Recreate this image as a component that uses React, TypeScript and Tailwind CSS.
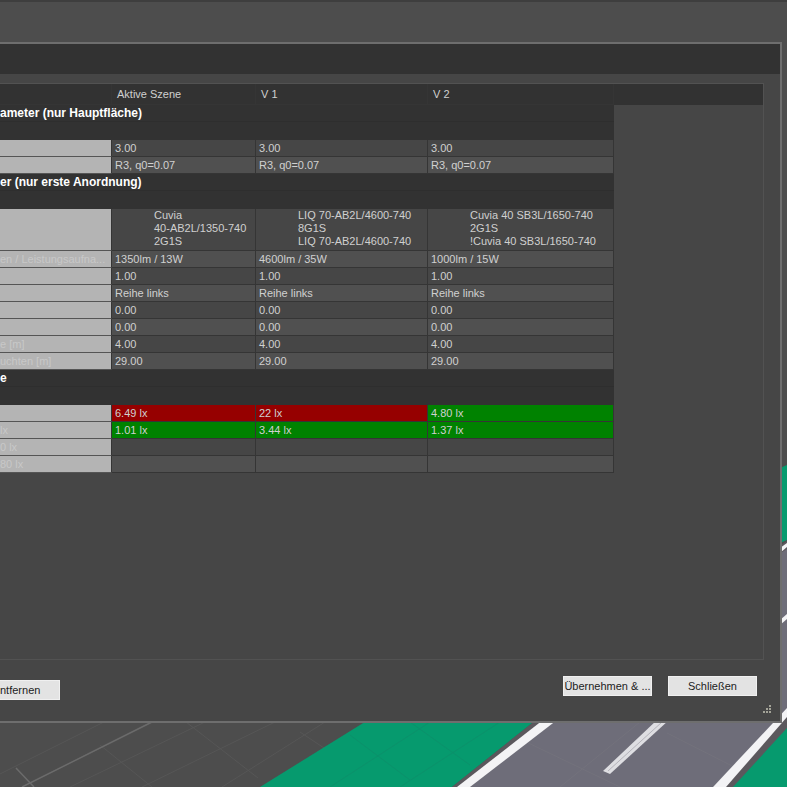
import clsx from "clsx";

type Row =
  | { kind: "group"; label: string }
  | { kind: "data"; label: string; values: string[]; tone?: ("bad" | "good")[] }
  | { kind: "lamp"; label: string; values: string[] };

const rows: Row[] = [
  { kind: "group", label: "ameter (nur Hauptfläche)" },
  { kind: "data", label: "", values: ["3.00", "3.00", "3.00"] },
  { kind: "data", label: "", values: ["R3, q0=0.07", "R3, q0=0.07", "R3, q0=0.07"] },
  { kind: "group", label: "er (nur erste Anordnung)" },
  {
    kind: "lamp",
    label: "",
    values: [
      "Cuvia\n40-AB2L/1350-740\n2G1S",
      "LIQ 70-AB2L/4600-740\n8G1S\nLIQ 70-AB2L/4600-740",
      "Cuvia 40 SB3L/1650-740\n2G1S\n!Cuvia 40 SB3L/1650-740",
    ],
  },
  { kind: "data", label: "en / Leistungsaufna...", values: ["1350lm / 13W", "4600lm / 35W", "1000lm / 15W"] },
  { kind: "data", label: "", values: ["1.00", "1.00", "1.00"] },
  { kind: "data", label: "", values: ["Reihe links", "Reihe links", "Reihe links"] },
  { kind: "data", label: "", values: ["0.00", "0.00", "0.00"] },
  { kind: "data", label: "", values: ["0.00", "0.00", "0.00"] },
  { kind: "data", label: "e [m]", values: ["4.00", "4.00", "4.00"] },
  { kind: "data", label: "uchten [m]", values: ["29.00", "29.00", "29.00"] },
  { kind: "group", label: "e" },
  { kind: "data", label: "", values: ["6.49 lx", "22 lx", "4.80 lx"], tone: ["bad", "bad", "good"] },
  { kind: "data", label: "lx", values: ["1.01 lx", "3.44 lx", "1.37 lx"], tone: ["good", "good", "good"] },
  { kind: "data", label: "0 lx", values: ["", "", ""] },
  { kind: "data", label: "80 lx", values: ["", "", ""] },
];

// rows are shaded alternately, starting over after each group heading
const isLight = (index: number) => {
  let n = 0;
  for (let i = index - 1; i >= 0 && rows[i].kind !== "group"; i--) n++;
  return n % 2 === 1;
};

const Scene = () => (
  <svg
    className="absolute inset-0 h-full w-full"
    viewBox="0 0 787 787"
    preserveAspectRatio="xMaxYMax slice"
    fill="none"
    aria-hidden="true"
  >
    <rect width="787" height="787" fill="#4d4d4d" />
    <rect width="787" height="2" fill="#3e3e3e" />
    <path
      d="M104 722L0 774M205 722L70 787M275 722L142 787M325 722L222 787M100 745L152 787M186 722L258 778M300 732L330 752"
      stroke="#565656"
    />
    <path d="M152 722L22 787M16 768L34 787" stroke="#6b6b6b" strokeWidth="1.5" />
    <path d="M368 720H536L452 787H260Z" fill="#069a6e" />
    <path d="M400 787L500 722M330 787L430 722M410 722L470 765M350 735L410 780" stroke="#0c916b" />
    <path d="M536 720L452 787H787V541L770 552V720Z" fill="#5b585d" />
    <path d="M554 720L468 787H713L787 712V549L770 560V720Z" fill="#6e6d79" />
    <path d="M520 739L620 787M667 733L740 770M560 787L640 722" stroke="#73727c" />
    <path d="M543 720H557L470 787H457Z" fill="#f3f3f5" />
    <path d="M657 720H669L610 774L603 771Z" fill="#dedee2" />
    <path d="M662 722L608 771" stroke="#b4b3ba" />
    <path d="M787 708V717L726 787H713Z" fill="#f3f3f5" />
    <path d="M787 728V787H733Z" fill="#069a6e" />
    <path d="M780 468L787 465V540L780 543Z" fill="#069a6e" />
    <path d="M780 548L787 543V547L780 553Z" fill="#f3f3f5" />
    <path d="M780 620L787 614V619L780 625Z" fill="#f3f3f5" />
  </svg>
);

const cell = "overflow-hidden border-b border-r border-[#353535] p-0 text-left font-normal whitespace-nowrap";

const ComparisonTable = () => (
  <table className="w-full table-fixed border-separate border-spacing-0">
    <colgroup>
      <col className="w-[112px]" />
      <col className="w-36" />
      <col className="w-[172px]" />
      <col className="w-[186px]" />
      <col />
    </colgroup>
    <thead className="bg-[#323232]">
      <tr className="h-[21px]">
        <td className={clsx(cell, "border-[#2b2b2b]")} />
        {["Aktive Szene", "V 1", "V 2"].map((name) => (
          <th key={name} scope="col" className={clsx(cell, "border-[#2b2b2b] pl-[5px]")}>
            {name}
          </th>
        ))}
        <td />
      </tr>
    </thead>
    <tbody>
      {rows.map((row, i) =>
        row.kind === "group" ? (
          <tr key={i} className="h-[35px]">
            <th
              colSpan={4}
              scope="colgroup"
              className="bg-[#323232] p-0 text-left align-top text-[12px] font-bold whitespace-nowrap text-white"
            >
              <div className="h-[17px] border-b border-[#2e2e2e]">{row.label}</div>
            </th>
          </tr>
        ) : (
          <tr
            key={i}
            className={clsx(row.kind === "lamp" ? "h-[42px]" : "h-[17px]", isLight(i) ? "bg-[#505050]" : "bg-[#464646]")}
          >
            <th scope="row" className={clsx(cell, "border-b-[#555] bg-[#b4b4b4] text-[#c8c8c8]")}>
              {row.label}
            </th>
            {row.values.map((value, j) => (
              <td
                key={j}
                className={clsx(
                  cell,
                  row.kind === "lamp" ? "pl-[42px] align-top leading-[13px] whitespace-pre" : "pl-[3px]",
                  row.kind === "data" && row.tone?.[j] === "bad" && "bg-[#960000]",
                  row.kind === "data" && row.tone?.[j] === "good" && "bg-[#008200]",
                )}
              >
                {value}
              </td>
            ))}
            <td className="bg-[#464646] p-0" />
          </tr>
        ),
      )}
    </tbody>
  </table>
);

const button = "h-5 border border-[#f0f0f0] bg-[#e3e3e3] text-[#1c1c1c] whitespace-nowrap";

export default function App() {
  return (
    <div className="relative flex h-screen flex-col overflow-hidden bg-[#4d4d4d] pt-[42px] pr-[5px] pb-16 font-['Liberation_Sans',Arial,sans-serif] text-[11px] leading-4 text-[#d0d0d0]">
      <Scene />
      <main className="relative flex min-h-0 flex-1 flex-col border-y-2 border-r-2 border-[#6e6e6e] bg-[#464646]">
        <header className="h-[30px] shrink-0 bg-[#323232]" />
        <section className="mt-[9px] mr-4 min-h-0 flex-1 overflow-hidden border-y border-r border-[#525252]">
          <ComparisonTable />
        </section>
        <footer className="flex h-[61px] shrink-0 items-start justify-between pt-4">
          <button className={clsx(button, "mt-1 w-[60px] border-l-0 text-left")}>ntfernen</button>
          <div className="flex gap-4 pr-[23px]">
            <button className={clsx(button, "w-[89px]")}>Übernehmen &amp; ...</button>
            <button className={clsx(button, "w-[89px]")}>Schließen</button>
          </div>
        </footer>
        <svg className="absolute right-2 bottom-2 size-[9px]" viewBox="0 0 9 9" fill="#a3a398" aria-hidden="true">
          <path d="M0 7h2v2H0zM3 7h2v2H3zM3 4h2v2H3zM6 7h2v2H6zM6 4h2v2H6zM6 1h2v2H6z" />
        </svg>
      </main>
    </div>
  );
}
